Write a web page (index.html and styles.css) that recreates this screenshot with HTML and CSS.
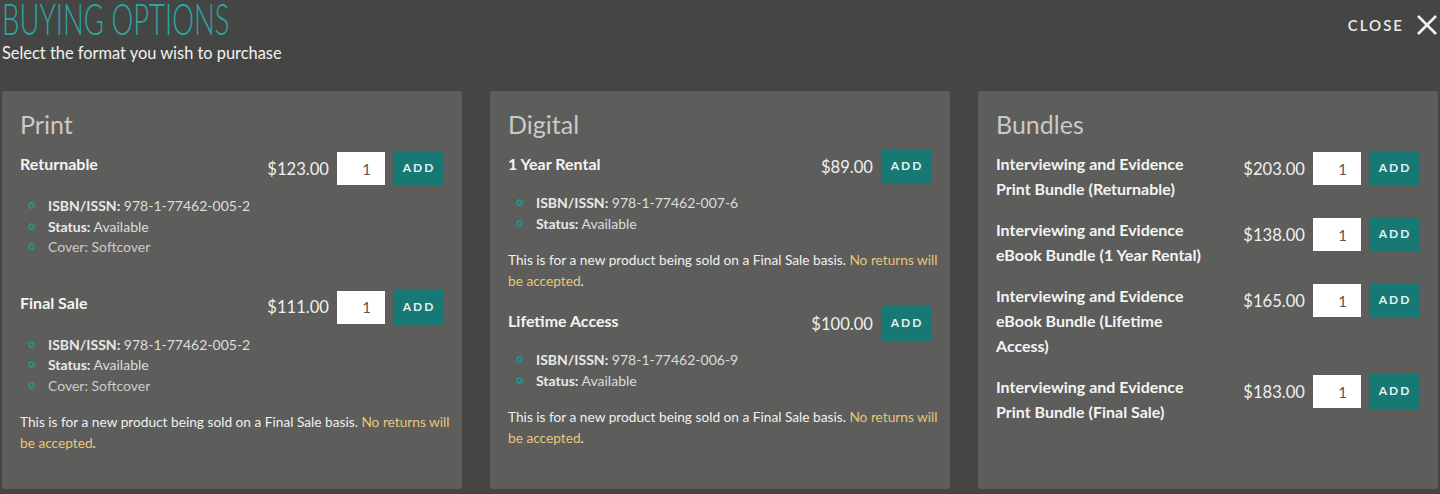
FILE: index.html
```html
<!DOCTYPE html>
<html lang="en">
<head>
  <meta charset="UTF-8">
  <meta name="viewport" content="width=device-width, initial-scale=1.0">
  <title>Buying Options</title>
  <link rel="stylesheet" href="styles.css">
</head>
<body>
  <div class="modal">
    <div class="modal-header">
      <div class="heading">
        <h1 class="title">BUYING OPTIONS</h1>
        <p class="subtitle">Select the format you wish to purchase</p>
      </div>
      <button class="close-btn" type="button">
        CLOSE
        <svg width="22" height="22" viewBox="0 0 22 22" aria-hidden="true">
          <path d="M2 2 L20 20 M20 2 L2 20" stroke="#f2f2f2" stroke-width="2.6" fill="none"/>
        </svg>
      </button>
    </div>

    <div class="cards">
      <!-- Print -->
      <div class="card">
        <h2 class="card-title">Print</h2>

        <div class="option">
          <div class="option-row">
            <div class="option-name">Returnable</div>
            <div class="buy">
              <span class="price">$123.00</span>
              <input class="qty" type="text" value="1">
              <button class="add-btn" type="button">ADD</button>
            </div>
          </div>
          <ul class="details">
            <li><b>ISBN/ISSN:</b> 978-1-77462-005-2</li>
            <li><b>Status:</b> Available</li>
            <li class="muted">Cover: Softcover</li>
          </ul>
        </div>

        <div class="option">
          <div class="option-row">
            <div class="option-name">Final Sale</div>
            <div class="buy">
              <span class="price">$111.00</span>
              <input class="qty" type="text" value="1">
              <button class="add-btn" type="button">ADD</button>
            </div>
          </div>
          <ul class="details">
            <li><b>ISBN/ISSN:</b> 978-1-77462-005-2</li>
            <li><b>Status:</b> Available</li>
            <li class="muted">Cover: Softcover</li>
          </ul>
          <p class="note">This is for a new product being sold on a Final Sale basis. <span class="warn">No returns will be accepted</span>.</p>
        </div>
      </div>

      <!-- Digital -->
      <div class="card digital">
        <h2 class="card-title">Digital</h2>

        <div class="option">
          <div class="option-row">
            <div class="option-name">1 Year Rental</div>
            <div class="buy">
              <span class="price">$89.00</span>
              <button class="add-btn" type="button">ADD</button>
            </div>
          </div>
          <ul class="details">
            <li><b>ISBN/ISSN:</b> 978-1-77462-007-6</li>
            <li><b>Status:</b> Available</li>
          </ul>
          <p class="note">This is for a new product being sold on a Final Sale basis. <span class="warn">No returns will be accepted</span>.</p>
        </div>

        <div class="option">
          <div class="option-row">
            <div class="option-name">Lifetime Access</div>
            <div class="buy">
              <span class="price">$100.00</span>
              <button class="add-btn" type="button">ADD</button>
            </div>
          </div>
          <ul class="details">
            <li><b>ISBN/ISSN:</b> 978-1-77462-006-9</li>
            <li><b>Status:</b> Available</li>
          </ul>
          <p class="note">This is for a new product being sold on a Final Sale basis. <span class="warn">No returns will be accepted</span>.</p>
        </div>
      </div>

      <!-- Bundles -->
      <div class="card bundles">
        <h2 class="card-title">Bundles</h2>

        <div class="option">
          <div class="option-row">
            <div class="option-name">Interviewing and Evidence Print Bundle (Returnable)</div>
            <div class="buy">
              <span class="price">$203.00</span>
              <input class="qty" type="text" value="1">
              <button class="add-btn" type="button">ADD</button>
            </div>
          </div>
        </div>

        <div class="option">
          <div class="option-row">
            <div class="option-name">Interviewing and Evidence eBook Bundle (1 Year Rental)</div>
            <div class="buy">
              <span class="price">$138.00</span>
              <input class="qty" type="text" value="1">
              <button class="add-btn" type="button">ADD</button>
            </div>
          </div>
        </div>

        <div class="option">
          <div class="option-row">
            <div class="option-name">Interviewing and Evidence eBook Bundle (Lifetime Access)</div>
            <div class="buy">
              <span class="price">$165.00</span>
              <input class="qty" type="text" value="1">
              <button class="add-btn" type="button">ADD</button>
            </div>
          </div>
        </div>

        <div class="option">
          <div class="option-row">
            <div class="option-name">Interviewing and Evidence Print Bundle (Final Sale)</div>
            <div class="buy">
              <span class="price">$183.00</span>
              <input class="qty" type="text" value="1">
              <button class="add-btn" type="button">ADD</button>
            </div>
          </div>
        </div>
      </div>
    </div>
  </div>
</body>
</html>
```

FILE: styles.css
```css
body {
  margin: 0;
  background-color: #454543;
  font-family: Lato, "Open Sans", sans-serif;
  color: #f0f0f0;
  overflow: hidden;
}

.modal {
  padding: 0 2px;
}

.modal-header {
  display: flex;
  justify-content: space-between;
  align-items: flex-start;
  height: 91px;
}

.heading {
  width: 400px;
}

.title {
  margin: 0;
  font-family: Lato, sans-serif;
  font-weight: 300;
  font-size: 43px;
  line-height: 37px;
  color: #2aa7a3;
  transform: scaleX(0.64);
  transform-origin: left center;
  white-space: nowrap;
}

.subtitle {
  margin: 6px 0 0;
  font-size: 16.4px;
  line-height: 20px;
  color: #f2f2f2;
}

.close-btn {
  display: flex;
  align-items: center;
  gap: 12px;
  margin-top: 14px;
  padding: 0;
  background: none;
  border: none;
  font-family: Lato, sans-serif;
  font-size: 15px;
  font-weight: 600;
  letter-spacing: 2px;
  color: #ececec;
  cursor: pointer;
}

.cards {
  display: grid;
  grid-template-columns: repeat(3, 1fr);
  gap: 28px;
}

.card {
  background-color: #5d5d5b;
  border-radius: 3px;
  height: 398px;
  box-sizing: border-box;
  padding: 18px 19px 18px 18px;
}

.card-title {
  margin: 0 0 12px;
  font-size: 25px;
  line-height: 30px;
  font-weight: 400;
  color: #c9c9c7;
}

.option {
  display: flow-root;
  margin-bottom: 17px;
}

.option-row {
  display: flex;
  align-items: flex-start;
  justify-content: space-between;
}

.option-name {
  font-size: 16px;
  font-weight: 700;
  line-height: 25px;
  color: #f4f4f4;
}

.bundles .option {
  margin-bottom: 16px;
}

.bundles .option-name {
  max-width: 212px;
}

.buy {
  display: flex;
  align-items: center;
  gap: 8px;
  height: 35px;
}

.digital .buy {
  margin-top: -2px;
}

.price {
  font-size: 16.6px;
  color: #f0f0f0;
}

.qty {
  width: 48px;
  height: 33px;
  box-sizing: border-box;
  border: none;
  background-color: #fff;
  padding: 0 14px 0 0;
  text-align: right;
  font-family: Lato, sans-serif;
  font-size: 15px;
  color: #555;
}

.add-btn {
  width: 50px;
  height: 35px;
  border: none;
  background-color: #177874;
  color: #e6f2f1;
  font-family: Lato, sans-serif;
  font-weight: 700;
  font-size: 12px;
  letter-spacing: 2px;
  padding: 0 0 2px 2px;
  cursor: pointer;
}

.details {
  list-style: none;
  margin: 10px 0 15px;
  padding: 0;
}

.digital .details {
  margin-top: 9px;
}

.details li {
  position: relative;
  padding-left: 28px;
  font-size: 14px;
  line-height: 20.5px;
  color: #dcdcdc;
}

.details li::before {
  content: "";
  position: absolute;
  left: 8px;
  top: 6px;
  width: 3px;
  height: 3px;
  border: 2px solid #2a8e8a;
  border-radius: 50%;
}

.details b {
  color: #e8e8e8;
}

.details .muted {
  color: #cbcbcb;
}

.note {
  margin: 0 -14px 0 0;
  font-size: 13.7px;
  line-height: 21px;
  color: #f0f0f0;
}

.warn {
  color: #e6c77a;
}
```
